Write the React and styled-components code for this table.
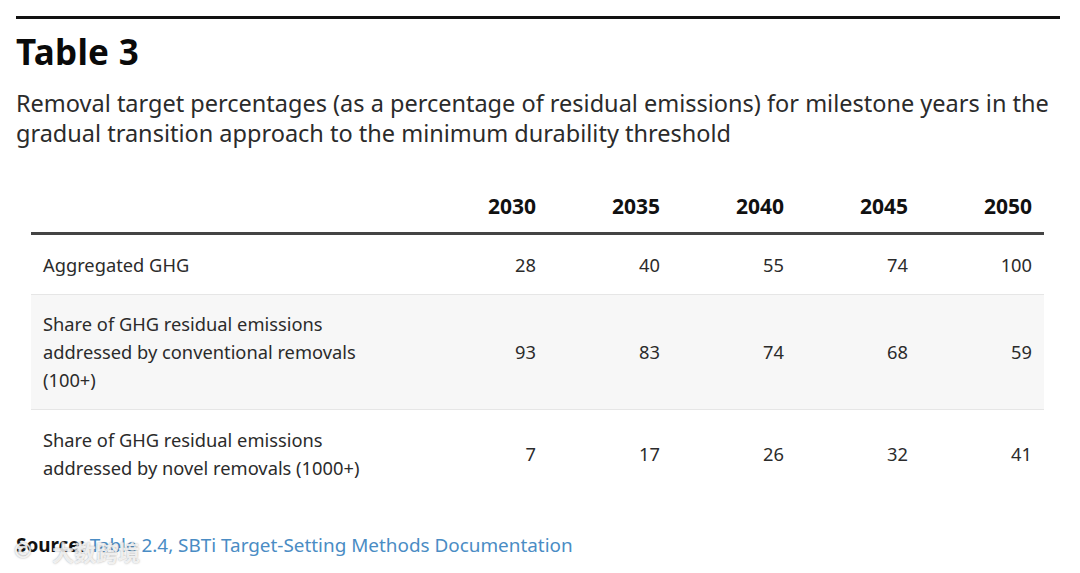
import React from "react";
import styled, { createGlobalStyle } from "styled-components";

const Global = createGlobalStyle`
  html, body { margin: 0; padding: 0; background: #fff; }
  body { font-family: "Noto Sans", "Open Sans", sans-serif; color: #222; }
`;

const Page = styled.div`
  width: 1080px;
  height: 573px;
  box-sizing: border-box;
  padding: 16px 20px 0 16px;
  position: relative;
  overflow: hidden;
`;

const Rule = styled.div`
  height: 3px;
  background: #111;
`;

const Title = styled.h1`
  margin: 12px 0 0 0;
  font-size: 35px;
  line-height: 42px;
  font-weight: 700;
  color: #0a0a0a;
  letter-spacing: 0.3px;
`;

const Subtitle = styled.p`
  margin: 15px 0 0 0;
  font-size: 23.5px;
  line-height: 30px;
  color: #2b2b2b;
`;

const Table = styled.table`
  margin: 44px 0 0 15px;
  width: 1013px;
  border-collapse: collapse;
  font-size: 18.3px;
  color: #2b2b2b;
`;

const Th = styled.th`
  text-align: right;
  font-weight: 700;
  color: #111;
  font-size: 21px;
  line-height: 28px;
  padding: 0 12px 12px 0;
  width: 112px;
  border-bottom: 3px solid #444;
`;

const Row = styled.tr`
  background: ${(p) => (p.$shade ? "#f7f7f7" : "#fff")};
  border-bottom: ${(p) => (p.$last ? "none" : "1px solid #e6e6e6")};
`;

const Label = styled.td`
  padding: ${(p) => p.$pad};
  padding-left: 12px;
  line-height: 28px;
  text-align: left;
`;

const Num = styled.td`
  text-align: right;
  padding-right: 12px;
  line-height: 28px;
`;

const Source = styled.div`
  margin-top: ${(p) => p.$mt}px;
  font-size: 18.9px;
  line-height: 28px;
  color: #4a8cc4;
`;

const SourceLabel = styled.span`
  font-weight: 700;
  color: #111;
`;

const Watermark = styled.div`
  position: absolute;
  left: 12px;
  top: 537px;
  font-family: "Noto Sans CJK SC", sans-serif;
  font-size: 22px;
  line-height: 28px;
  font-weight: 700;
  color: rgba(255, 255, 255, 0.8);
  text-shadow: 0 0 2px rgba(90, 90, 90, 0.55);
  display: flex;
  align-items: center;
  gap: 18px;
`;

const Logo = styled.span`
  font-size: 22px;
  font-family: "DejaVu Sans", sans-serif;
`;

const years = ["2030", "2035", "2040", "2045", "2050"];
const rows = [
  { label: ["Aggregated GHG"], vals: [28, 40, 55, 74, 100], pad: "16px 0 15px 12px" },
  {
    label: ["Share of GHG residual emissions", "addressed by conventional removals", "(100+)"],
    vals: [93, 83, 74, 68, 59],
    pad: "15px 0 15px 12px",
    shade: true,
  },
  {
    label: ["Share of GHG residual emissions", "addressed by novel removals (1000+)"],
    vals: [7, 17, 26, 32, 41],
    pad: "16px 0 16px 12px",
    last: true,
  },
];

export default function App() {
  return (
    <Page>
      <Global />
      <Rule />
      <Title>Table 3</Title>
      <Subtitle>
        Removal target percentages (as a percentage of residual emissions) for milestone years in the
        <br />
        gradual transition approach to the minimum durability threshold
      </Subtitle>
      <Table>
        <thead>
          <tr>
            <th style={{ borderBottom: "3px solid #444" }} />
            {years.map((y) => (
              <Th key={y}>{y}</Th>
            ))}
          </tr>
        </thead>
        <tbody>
          {rows.map((r, i) => (
            <Row key={i} $shade={r.shade} $last={r.last}>
              <Label $pad={r.pad}>
                {r.label.map((l, j) => (
                  <React.Fragment key={j}>
                    {l}
                    {j < r.label.length - 1 && <br />}
                  </React.Fragment>
                ))}
              </Label>
              {r.vals.map((v, j) => (
                <Num key={j}>{v}</Num>
              ))}
            </Row>
          ))}
        </tbody>
      </Table>
      <Source $mt={33}>
        <SourceLabel>Source:</SourceLabel> Table 2.4, SBTi Target-Setting Methods Documentation
      </Source>
      <Watermark>
        <Logo>©</Logo>
        <span>大数跨境</span>
      </Watermark>
    </Page>
  );
}
